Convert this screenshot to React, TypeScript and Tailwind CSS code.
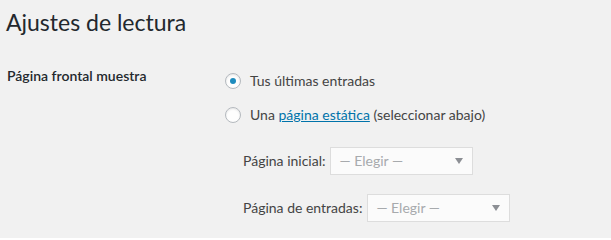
import React from 'react';

const font = { fontFamily: '"Segoe UI", Lato, "Noto Sans", sans-serif' };

function Radio({ checked }: { checked?: boolean }) {
  return (
    <span className="w-4 h-4 rounded-full border border-[#b4b9be] bg-[#fefefe] shadow-[inset_0_1px_2px_rgba(0,0,0,0.1)] flex items-center justify-center shrink-0">
      {checked && <span className="w-[6px] h-[6px] rounded-full bg-[#1e8cbe]" />}
    </span>
  );
}

function Select() {
  return (
    <div className="w-[143px] h-[28px] border border-[#dddddd] bg-[#fbfbfb] flex items-center justify-between pl-2 pr-[9px] text-[14px] text-[#a7aaad] shrink-0">
      <span>— Elegir —</span>
      <svg width="8" height="6" viewBox="0 0 8 6">
        <path d="M0 0 L8 0 L4 6 Z" fill="#8c8f94" />
      </svg>
    </div>
  );
}

export default function App() {
  return (
    <div className="w-full h-[238px] bg-[#f1f1f1] pl-[6px] text-[#444] overflow-hidden" style={font}>
      <h1 className="text-[23px] font-normal text-[#23282d] leading-[30px] pt-[7px]">Ajustes de lectura</h1>

      <div className="flex mt-[33px]">
        {/* Label */}
        <div className="w-[219px] pl-[1px] text-[14px] font-semibold text-[#23282d] leading-[20px] mt-[-4px]">
          Página frontal muestra
        </div>

        {/* Options */}
        <div className="flex flex-col text-[14px] leading-[20px]">
          <label className="flex items-center gap-[9px] h-[20px] mt-[1px]">
            <Radio checked />
            <span>Tus últimas entradas</span>
          </label>
          <label className="flex items-center gap-[9px] h-[20px] mt-[14px]">
            <Radio />
            <span>
              Una{' '}
              <a href="#" className="text-[#0073aa] underline">
                página estática
              </a>{' '}
              (seleccionar abajo)
            </span>
          </label>

          <div className="pl-[18px] mt-[22px] flex flex-col gap-[19px]">
            <div className="flex items-center gap-[5px]">
              <span>Página inicial:</span>
              <Select />
            </div>
            <div className="flex items-center gap-[5px]">
              <span>Página de entradas:</span>
              <Select />
            </div>
          </div>
        </div>
      </div>
    </div>
  );
}
